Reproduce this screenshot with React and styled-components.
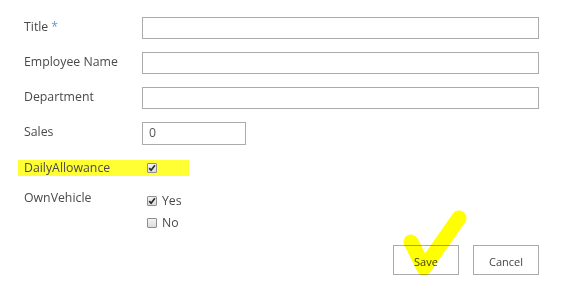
import React from 'react'
import styled, { createGlobalStyle } from 'styled-components'

const Global = createGlobalStyle`
  body {
    margin: 0;
    background: #fff;
    font-family: "Open Sans", "Noto Sans", sans-serif;
    color: #4a4a4a;
  }
`

const Form = styled.div`
  position: relative;
  width: 576px;
  height: 294px;
  padding: 17px 0 0 24px;
  box-sizing: border-box;
`

const Row = styled.div`
  display: grid;
  grid-template-columns: 118px 1fr;
  align-items: start;
  margin-bottom: ${p => p.$gap || 13}px;
`

const Label = styled.div`
  font-size: 12.3px;
  line-height: 16px;
  padding-top: ${p => p.$top ?? 2}px;
  white-space: nowrap;
  color: #4a4a4a;
`

const Star = styled.span`
  color: #5b9bd5;
  margin-left: 3px;
`

const Input = styled.div`
  width: ${p => p.$w || 397}px;
  height: ${p => p.$h || 22}px;
  box-sizing: border-box;
  border: 1px solid #ababab;
  font-size: 12.3px;
  line-height: 20px;
  padding-left: 6px;
  color: #555;
`

const Highlight = styled.div`
  display: grid;
  grid-template-columns: 118px 1fr;
  align-items: center;
  margin-left: -6px;
  padding-left: 6px;
  width: 165px;
  height: 16px;
  background: #ffff33;
  margin-bottom: 14px;
`

const CheckCell = styled.div`
  display: flex;
`

const Box = styled.span`
  display: inline-block;
  width: 10px;
  height: 10px;
  box-sizing: border-box;
  border: 1px solid #8f8f8f;
  background: linear-gradient(#f4f4f4, #dcdcdc);
  border-radius: 1px;
  margin-left: 5px;
  position: relative;
  svg { position: absolute; left: 0; top: 0; }
`

const Options = styled.div`
  display: flex;
  flex-direction: column;
  gap: 6px;
  padding-top: 3px;
`

const Option = styled.div`
  display: flex;
  align-items: center;
  gap: 5px;
  font-size: 12.3px;
  line-height: 16px;
`

const Buttons = styled.div`
  display: flex;
  gap: 14px;
  justify-content: flex-end;
  width: 515px;
`

const Button = styled.div`
  width: 66px;
  height: 30px;
  box-sizing: border-box;
  border: 1px solid #ababab;
  display: flex;
  align-items: center;
  justify-content: center;
  font-size: 11px;
  color: #444;
  padding-top: 2px;
`

const Marker = styled.svg`
  position: absolute;
  left: 395px;
  top: 205px;
  pointer-events: none;
  mix-blend-mode: multiply;
`

const Check = ({ on }) => (
  <Box>
    {on && (
      <svg width="8" height="8" viewBox="0 0 8 8">
        <path d="M1.2 4.2 L3.1 6.2 L6.9 1.3" fill="none" stroke="#2b2b2b" strokeWidth="1.7" />
      </svg>
    )}
  </Box>
)

export default function App() {
  return (
    <Form>
      <Global />
      <Row>
        <Label>Title<Star>*</Star></Label>
        <Input />
      </Row>
      <Row>
        <Label>Employee Name</Label>
        <Input />
      </Row>
      <Row>
        <Label>Department</Label>
        <Input />
      </Row>
      <Row $gap={15}>
        <Label>Sales</Label>
        <Input $w={104} $h={23}>0</Input>
      </Row>
      <Highlight>
        <Label $top={0}>DailyAllowance</Label>
        <CheckCell><Check on /></CheckCell>
      </Highlight>
      <Row $gap={14}>
        <Label $top={0}>OwnVehicle</Label>
        <Options>
          <Option><Check on />Yes</Option>
          <Option><Check />No</Option>
        </Options>
      </Row>
      <Buttons>
        <Button>Save</Button>
        <Button>Cancel</Button>
      </Buttons>
      <Marker width="80" height="80" viewBox="0 0 80 80">
        <path
          d="M16 37 L29 63 L64 13"
          fill="none"
          stroke="#ffff00"
          strokeWidth="15"
          strokeLinecap="round"
          strokeLinejoin="round"
        />
      </Marker>
    </Form>
  )
}
